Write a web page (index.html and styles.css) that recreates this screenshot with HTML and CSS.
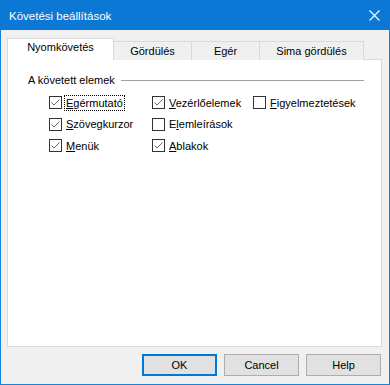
FILE: index.html
```html
<!DOCTYPE html>
<html>
<head>
	<meta charset="utf-8" />
	<title>Követési beállítások</title>
	<link rel="stylesheet" href="styles.css">
</head>
<body>
	<div class="window">
		<div class="titlebar">
			<span class="title">Követési beállítások</span>
			<svg class="close" width="11" height="11" viewBox="0 0 11 11">
				<path d="M0.5 0.5 L10.5 10.5 M10.5 0.5 L0.5 10.5" stroke="#fff" stroke-width="1.1" fill="none" />
			</svg>
		</div>
		<div class="client">
			<div class="tabs">
				<div class="tab is-active tab-1">Nyomkövetés</div>
				<div class="tab tab-2">Gördülés</div>
				<div class="tab tab-3">Egér</div>
				<div class="tab tab-4">Sima gördülés</div>
			</div>
			<div class="panel">
				<div class="group-head">
					<span class="group-label">A követett elemek</span>
					<span class="group-line"></span>
				</div>
				<div class="checks">
					<label class="check"><span class="box on"></span><span class="text focus"><u>E</u>gérmutató</span></label>
					<label class="check"><span class="box on"></span><span class="text"><u>V</u>ezérlőelemek</span></label>
					<label class="check"><span class="box"></span><span class="text"><u>F</u>igyelmeztetések</span></label>
					<label class="check"><span class="box on"></span><span class="text"><u>S</u>zövegkurzor</span></label>
					<label class="check"><span class="box"></span><span class="text">E<u>l</u>emleírások</span></label>
					<span></span>
					<label class="check"><span class="box on"></span><span class="text"><u>M</u>enük</span></label>
					<label class="check"><span class="box on"></span><span class="text"><u>A</u>blakok</span></label>
				</div>
			</div>
			<div class="buttons">
				<button class="btn is-default">OK</button>
				<button class="btn">Cancel</button>
				<button class="btn">Help</button>
			</div>
		</div>
	</div>
</body>
</html>
```

FILE: styles.css
```css
html, body {
	margin: 0;
	padding: 0;
	background: #f0f0f0;
}

.window {
	width: 390px;
	height: 385px;
	box-sizing: border-box;
	border: 1px solid #1883d7;
	border-top: 0;
	background: #f0f0f0;
	font-family: "Liberation Sans", Arial, sans-serif;
	font-size: 11px;
	color: #000;
	display: flex;
	flex-direction: column;
}

.titlebar {
	height: 30px;
	margin: 0 -1px;
	background: #0a78d4;
	display: flex;
	align-items: center;
	justify-content: space-between;
	padding: 0 10px 0 9px;
	box-sizing: border-box;
}

.title {
	color: #fff;
	font-size: 11.5px;
	padding-top: 1px;
}

.close {
	display: block;
	margin-top: 1px;
}

.client {
	flex: 1;
	padding: 8px 8px 0 6px;
	display: flex;
	flex-direction: column;
}

.tabs {
	display: flex;
	align-items: flex-end;
	height: 22px;
	margin-bottom: -1px;
	position: relative;
	z-index: 1;
}

.tab {
	box-sizing: border-box;
	height: 19px;
	border: 1px solid #d9d9d9;
	border-bottom: 0;
	margin-left: -1px;
	text-align: center;
	line-height: 18px;
	background: #f0f0f0;
}

.tab.is-active {
	height: 22px;
	background: #fff;
	margin-left: 0;
	line-height: 17px;
	position: relative;
	z-index: 2;
}

.tab-1 { width: 107px; }
.tab-2 { width: 79px; }
.tab-3 { width: 69px; }
.tab-4 { width: 105px; }

.panel {
	height: 288px;
	box-sizing: border-box;
	background: #fff;
	border: 1px solid #d9d9d9;
	margin-right: -1px;
}

.group-head {
	display: flex;
	align-items: center;
	padding: 14px 17px 0 20px;
}

.group-line {
	flex: 1;
	height: 1px;
	background: #a0a0a0;
	margin-left: 6px;
	margin-top: 1px;
}

.checks {
	display: grid;
	grid-template-columns: 103px 101px 110px;
	grid-auto-rows: 21.5px;
	padding: 6px 0 0 41px;
}

.check {
	display: flex;
	align-items: center;
}

.box {
	width: 13px;
	height: 13px;
	box-sizing: border-box;
	border: 1px solid #333;
	background: #fff;
	margin-right: 2px;
	flex: none;
}

.box.on {
	background: #fff url("data:image/svg+xml;utf8,<svg xmlns='http://www.w3.org/2000/svg' width='11' height='11'><path d='M1.5 5.5 L4 8 L9.5 2.5' stroke='%23555' stroke-width='0.9' fill='none'/></svg>") no-repeat center;
}

.text {
	padding: 1px 1px;
	border: 1px solid transparent;
}

.text.focus {
	border: 1px dotted #000;
}

.text u {
	text-decoration: underline;
	text-underline-offset: 1px;
}

.buttons {
	display: flex;
	justify-content: flex-end;
	gap: 7px;
	padding-top: 7px;
	padding-right: 0;
}

.btn {
	width: 75px;
	height: 22px;
	box-sizing: border-box;
	border: 1px solid #adadad;
	background: #e1e1e1;
	font-family: "Liberation Sans", Arial, sans-serif;
	font-size: 11px;
	color: #000;
	padding: 0;
}

.btn.is-default {
	border: 2px solid #0078d7;
}
```
